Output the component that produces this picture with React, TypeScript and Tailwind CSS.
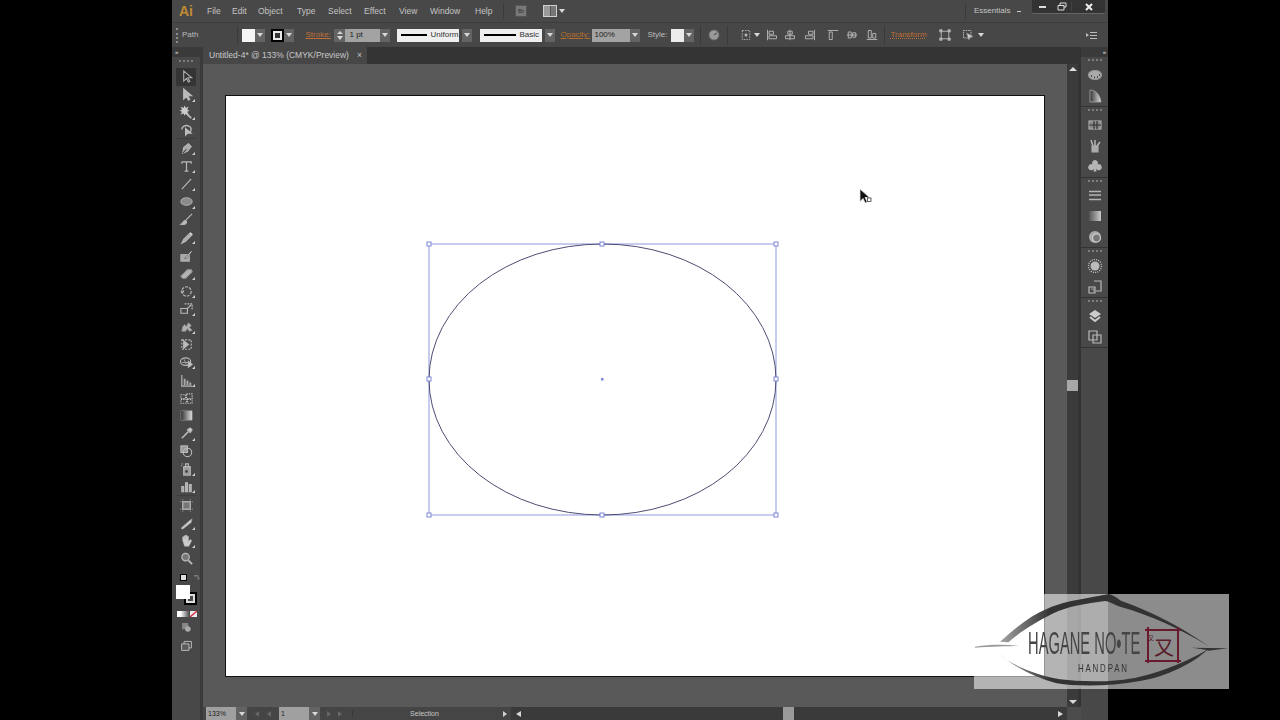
import type { ReactNode } from 'react'

const menus = [
  { label: 'File', w: 'w-[25px]' },
  { label: 'Edit', w: 'w-[26px]' },
  { label: 'Object', w: 'w-[39px]' },
  { label: 'Type', w: 'w-[31px]' },
  { label: 'Select', w: 'w-[36px]' },
  { label: 'Effect', w: 'w-[35px]' },
  { label: 'View', w: 'w-[31px]' },
  { label: 'Window', w: 'w-[45px]' },
  { label: 'Help', w: 'w-[28px]' },
]

function Icon({ children, size = 16 }: { children: ReactNode; size?: number }) {
  return (
    <svg width={size} height={size} viewBox="0 0 16 16" fill="none" stroke="#b9b9b9" strokeWidth="1.2" className="blur-[0.4px]">
      {children}
    </svg>
  )
}

function Caret({ className = '' }: { className?: string }) {
  return <span className={`block w-0 h-0 border-x-[3px] border-x-transparent border-t-[4px] border-t-[#d8d8d8] ${className}`} />
}

function DropBtn({ className = '' }: { className?: string }) {
  return (
    <div className={`w-[10px] h-[13px] bg-[#636363] flex items-center justify-center ${className}`}>
      <Caret />
    </div>
  )
}

const tools: { icon: ReactNode; flyout?: boolean; active?: boolean; sep?: boolean }[] = [
  { active: true, icon: <path d="M5 2v11l3-3 2 4 1.5-.7-2-4h4z" stroke="#aaa" fill="#333" /> },
  { flyout: true, icon: <path d="M5 2v11l3-3 2 4 1.5-.7-2-4h4z" fill="#bbb" stroke="#bbb" /> },
  { flyout: true, icon: <g><path d="M7 8l6 6" strokeWidth="2" /><path d="M6 2l1 2 2-1-1 2 2 1-2 1 1 2-2-1-1 2-1-2-2 1 1-2-2-1 2-1-1-2 2 1z" fill="#ccc" stroke="#ccc" /></g> },
  { sep: true, icon: <g><path d="M3 8a5 4 0 1 1 8 3" strokeWidth="1.5" /><path d="M7 7v7l2-2 4 0z" fill="#bbb" stroke="#bbb" /></g> },
  { flyout: true, icon: <g><path d="M4 13l1-6 5-4 3 3-4 5z" fill="#aaa" /><path d="M4 13l4-4" stroke="#444" /></g> },
  { flyout: true, icon: <path d="M3 3h10v2M3 3v2M8 3v10M6 13h4" strokeWidth="1.3" /> },
  { flyout: true, icon: <path d="M3 14L13 3" /> },
  { flyout: true, icon: <ellipse cx="8" cy="8" rx="6" ry="4" fill="#8a8a8a" stroke="#aaa" /> },
  { icon: <g><path d="M14 2L7 9" /><path d="M7 9c-3 0-2 3-5 4 3 1 6 0 6-3z" fill="#bbb" /></g> },
  { flyout: true, icon: <g><path d="M12 3L5 10 3 14l4-2 7-7z" fill="#aaa" /><path d="M12 3l2 2" stroke="#ddd" /></g> },
  { icon: <g><path d="M2 7h9v7H2z" fill="#aaa" stroke="#aaa" /><path d="M6 11l7-8 1 1-6 7z" fill="#ddd" stroke="#333" strokeWidth=".6" /></g> },
  { flyout: true, icon: <path d="M2 11l7-7h4l1 2-7 7H4z" fill="#b5b5b5" stroke="#999" /> },
  { flyout: true, icon: <g><circle cx="8" cy="8" r="5" strokeDasharray="3 1.3" /><path d="M2 7l2 2 1-2" /></g> },
  { flyout: true, icon: <g><path d="M2 8h7v5H2z" /><path d="M6 3h8v7" strokeDasharray="2 1" /><path d="M9 8l4-4" /></g> },
  { flyout: true, icon: <path d="M3 13c1-3 0-5 3-7l2 2 2-4 3 3-2 2 3 3-3 1-2-3-2 3z" fill="#b0b0b0" stroke="#999" strokeWidth=".7" /> },
  { icon: <g><path d="M3 3h10v10H3z" strokeDasharray="2 1.5" /><path d="M5 4l5 4-5 4z" fill="#bbb" /></g> },
  { flyout: true, icon: <g><ellipse cx="7" cy="7" rx="5.5" ry="4" /><path d="M5 4l3 6M3 8h7" strokeWidth=".8" /><path d="M10 7l4 3-4 3z" fill="#ccc" /></g> },
  { flyout: true, icon: <g><path d="M3 2v12h11" /><path d="M5 6h2v7H5zM8 8h2v5H8zM11 10h2v3h-2z" fill="#aaa" stroke="none" /></g> },
  { icon: <path d="M2 4h5v4H2zM8 3h6v5H8zM2 9h6v4H2zM9 9h5v4H9z" strokeDasharray="1.5 1" /> },
  { icon: <rect x="2" y="3" width="12" height="10" fill="url(#tg)" stroke="#999" strokeWidth=".5" /> },
  { flyout: true, icon: <g><path d="M3 13l7-7" strokeWidth="1.6" /><path d="M9 4l3-2 2 2-2 3z" fill="#ccc" /></g> },
  { icon: <g><rect x="2" y="2" width="7" height="7" fill="#999" /><circle cx="9" cy="9" r="4.5" /></g> },
  { flyout: true, icon: <g><rect x="5" y="5" width="7" height="9" fill="#999" /><circle cx="8" cy="10" r="1.6" fill="#444" stroke="none" /><path d="M7 2h3v3H7z" /><path d="M3 2h1M2 4h1" /></g> },
  { flyout: true, sep: true, icon: <path d="M3 14V8h2v6M7 14V4h2v10M11 14V6h2v8" fill="#aaa" /> },
  { icon: <g><rect x="4" y="4" width="8" height="8" fill="#777" /><path d="M1 4h14M1 12h14M4 1v14M12 1v14" strokeWidth=".6" strokeDasharray="1.5 1" /></g> },
  { flyout: true, icon: <path d="M2 13l9-8 3-2-1 4-9 7z" fill="#ccc" stroke="#999" strokeWidth=".6" /> },
  { flyout: true, icon: <path d="M4 8V4h1.5v3V3H7v4V2.5h1.5V7V3.500H10V9l2-2 1.500 1-3 6H6z" fill="#ccc" stroke="#bbb" strokeWidth=".6" /> },
  { icon: <g><circle cx="7" cy="6.500" r="4" fill="#777" stroke="#bbb" /><path d="M10 10l4 4" strokeWidth="2" /></g> },
]

const dockGroups: ReactNode[][] = [
  [
    <g key="a"><ellipse cx="8" cy="8" rx="6.500" ry="4.500" fill="#aaa" stroke="#999" /><path d="M4 9h1M7 10.500h1M10 10h1M12 8h1" stroke="#333" strokeWidth="1.300" /></g>,
    <path key="b" d="M3 2c6 0 10 5 11 12H3z" fill="url(#tg)" stroke="#aaa" strokeWidth=".8" />,
  ],
  [
    <g key="a"><rect x="2" y="4" width="12" height="8" fill="#888" stroke="#aaa" /><path d="M7 4v8M10 4v8M2 8h12" stroke="#333" /></g>,
    <g key="b"><path d="M5 8h6v6H5z" fill="#aaa" stroke="#aaa" /><path d="M6 8L4 2M8 8V2M10 8l3-4" stroke="#bbb" strokeWidth="1.400" /></g>,
    <path key="c" d="M8 2a3 3 0 0 1 2.500 4.500 3 3 0 1 1-1.500 4l.5 3h-3l.5-3a3 3 0 1 1-1.500-4A3 3 0 0 1 8 2z" fill="#b5b5b5" stroke="none" />,
  ],
  [
    <path key="a" d="M2 3.500h12M2 7h12M2 11.500h12" stroke="#b5b5b5" strokeWidth="1.600" />,
    <rect key="b" x="2" y="3" width="12" height="10" fill="url(#tg2)" stroke="none" />,
    <g key="c"><circle cx="8" cy="8" r="6" fill="#aaa" stroke="none" /><circle cx="9.500" cy="9" r="4" fill="#777" stroke="#ccc" /></g>,
  ],
  [
    <g key="a"><circle cx="8" cy="8" r="6.500" strokeDasharray="1.200 1" /><circle cx="8" cy="8" r="4.500" fill="#bbb" stroke="none" /></g>,
    <g key="b"><path d="M7 2h7v10H9" /><path d="M2 8h6v6H2z" /><path d="M4 10h3v3" strokeWidth=".8" /></g>,
  ],
  [
    <g key="a"><path d="M8 2l6 4-6 4-6-4z" fill="#ccc" stroke="none" /><path d="M3 9l5 4 5-4" stroke="#ccc" strokeWidth="2" /></g>,
    <g key="b"><path d="M2 2h8v9H2z" /><path d="M6 6h8v8H6z" /></g>,
  ],
]

function Grip() {
  return <div className="mx-auto w-[14px] h-[2px] border-t-2 border-dotted border-[#7d7d7d]" />
}

function AlignIcon({ v, ml }: { v: number; ml: string }) {
  return (
    <div className={`w-[12px] h-[12px] ${ml}`}>
      <Icon size={12}>
        {v === 0 && <path d="M2 1v14M4 3h6v4H4zM4 9h10v4H4z" />}
        {v === 1 && <path d="M8 1v14M5 3h6v4H5zM2 9h12v4H2z" />}
        {v === 2 && <path d="M14 1v14M6 3h6v4H6zM2 9h10v4H2z" />}
        {v === 3 && <path d="M1 2h14M3 4h4v10H3z" />}
        {v === 4 && <path d="M1 8h14M3 4h4v8H3zM9 5h4v6H9z" />}
        {v === 5 && <path d="M1 14h14M3 2h4v10H3zM9 6h4v6H9z" />}
      </Icon>
    </div>
  )
}

function ControlBar() {
  const label = 'text-[8px] leading-none'
  return (
    <div className="h-[25px] flex items-center bg-[#474747] border-t border-[#3c3c3c] text-[#bdbdbd] relative">
      <div className="ml-[4px] w-[2px] h-[15px] border-l-2 border-dotted border-[#8a8a8a]" />
      <span className={`ml-[4px] ${label}`}>Path</span>
      <div className="ml-[39px] w-px h-[18px] bg-[#3a3a3a]" />
      <div className="ml-[4px] w-[13px] h-[13px] bg-[#f4f4f4]" />
      <DropBtn />
      <div className="ml-[6px] w-[13px] h-[13px] bg-black p-[2px]">
        <div className="w-full h-full bg-[#e8e8e8] p-[2px]">
          <div className="w-full h-full bg-[#333]" />
        </div>
      </div>
      <DropBtn />
      <span className={`ml-[11px] w-[29px] text-[#c0713a] underline ${label}`}>Stroke:</span>
      <div className="w-[11px] h-[13px] bg-[#636363] flex flex-col items-center justify-center gap-[2px]">
        <span className="block w-0 h-0 border-x-[3px] border-x-transparent border-b-[3px] border-b-[#cfcfcf]" />
        <Caret />
      </div>
      <div className={`w-[35px] h-[13px] bg-[#a3a3a3] text-[#222] pl-[4px] flex items-center ${label}`}>1 pt</div>
      <DropBtn />
      <div className="ml-[7px] w-[62px] h-[13px] bg-[#efefef] flex items-center pl-[4px] gap-[3px]">
        <div className="w-[26px] h-[2px] bg-black" />
        <span className={`${label} text-[#333]`}>Uniform</span>
      </div>
      <DropBtn className="ml-[3px]" />
      <div className="ml-[8px] w-[62px] h-[13px] bg-[#efefef] flex items-center pl-[4px] gap-[3px]">
        <div className="w-[32px] h-[2px] bg-black" />
        <span className={`${label} text-[#333]`}>Basic</span>
      </div>
      <DropBtn className="ml-[3px]" />
      <span className={`ml-[5px] w-[32px] text-[#b5702f] underline ${label}`}>Opacity:</span>
      <div className={`w-[38px] h-[13px] bg-[#a3a3a3] text-[#222] pl-[2px] flex items-center ${label}`}>100%</div>
      <DropBtn />
      <span className={`ml-[7px] w-[24px] ${label}`}>Style:</span>
      <div className="w-[13px] h-[13px] bg-[#ececec]" />
      <DropBtn />
      <div className="ml-[6px] w-px h-[18px] bg-[#3a3a3a]" />
      <div className="ml-[7px] w-[12px] h-[12px]">
        <Icon size={12}><circle cx="8" cy="8" r="6.500" fill="#9a9a9a" stroke="#777" /><path d="M8 8l4-3" stroke="#333" /></Icon>
      </div>
      <div className="ml-[7px] w-px h-[18px] bg-[#3a3a3a]" />
      <div className="ml-[12px] w-[12px] h-[12px]">
        <Icon size={12}><path d="M3 2h10v12H3z" strokeDasharray="2 1.500" /><circle cx="8" cy="8" r="1.500" fill="#bbb" /></Icon>
      </div>
      <Caret className="ml-[2px]" />
      <AlignIcon v={0} ml="ml-[6px]" />
      <AlignIcon v={1} ml="ml-[6px]" />
      <AlignIcon v={2} ml="ml-[8px]" />
      <AlignIcon v={3} ml="ml-[11px]" />
      <AlignIcon v={4} ml="ml-[7px]" />
      <AlignIcon v={5} ml="ml-[8px]" />
      <div className="ml-[6px] w-px h-[18px] bg-[#3a3a3a]" />
      <span className={`ml-[5px] w-[36px] text-[#bf6d33] underline decoration-dotted ${label}`}>Transform</span>
      <div className="ml-[13px] w-[12px] h-[12px]">
        <Icon size={12}><path d="M3 3h10v10H3z" /><path d="M1 1h3v3H1zM12 1h3v3h-3zM1 12h3v3H1zM12 12h3v3h-3z" fill="#aaa" /></Icon>
      </div>
      <div className="ml-[11px] w-[12px] h-[12px]">
        <Icon size={12}><path d="M2 2h10v10H2z" strokeDasharray="2 1" /><path d="M6 5l9 5-4 1-2 4z" fill="#ccc" stroke="#777" strokeWidth=".7" /></Icon>
      </div>
      <Caret className="ml-[4px]" />
      <div className="ml-[102px] flex items-center gap-[1px]">
        <span className="block w-0 h-0 border-y-[2px] border-y-transparent border-l-[3px] border-l-[#bbb]" />
        <div className="w-[7px] h-[7px] border-y border-[#bbb] flex items-center"><div className="w-full h-px bg-[#bbb]" /></div>
      </div>
    </div>
  )
}

function Toolbar() {
  return (
    <div className="w-[31px] shrink-0 flex flex-col bg-[#484848] border-r-[3px] border-[#3a3a3a]">
      <div className="h-[10px] bg-[#3a3a3a] text-[#c9c9c9] text-[6px] leading-[10px] pl-[3px] font-bold">»</div>
      <div className="pt-[3px] h-[11px]"><Grip /></div>
      <div className="flex flex-col pl-[4px] pr-[4px]">
        {tools.map((tool, i) => (
          <div key={i} className={`relative h-[17.85px] flex items-center justify-center ${tool.active ? 'bg-[#343434]' : ''} ${tool.sep ? 'border-b border-[#3e3e3e]' : ''}`}>
            <Icon size={15}>{tool.icon}</Icon>
            {tool.flyout && <span className="absolute right-[1px] bottom-[2px] w-0 h-0 border-l-[3px] border-l-transparent border-b-[3px] border-b-[#cfcfcf]" />}
          </div>
        ))}
      </div>
      <div className="mt-[6px] ml-[8px] flex items-center gap-[6px]">
        <div className="w-[7px] h-[7px] bg-[#ddd] border border-black" />
        <Icon size={8}><path d="M3 3h8v8M3 3l3 3M11 11l3-3" /></Icon>
      </div>
      <div className="relative mt-[3px] ml-[4px] w-[21px] h-[20px]">
        <div className="absolute right-0 bottom-0 w-[13px] h-[13px] bg-black p-[2px]">
          <div className="w-full h-full border-2 border-[#ddd] bg-[#4a4a4a]" />
        </div>
        <div className="absolute left-0 top-0 w-[14px] h-[14px] bg-white" />
      </div>
      <div className="mt-[6px] ml-[5px] flex gap-[1px]">
        <div className="w-[12px] h-[6px] bg-[linear-gradient(90deg,#fff_30%,#555)]" />
        <svg width="7" height="6" viewBox="0 0 7 6"><rect width="7" height="6" fill="#eee" /><path d="M0 6L7 0" stroke="#d43a4a" strokeWidth="1.500" /></svg>
      </div>
      <div className="mt-[5px] flex justify-center">
        <Icon size={11}><rect x="2" y="2" width="8" height="8" fill="#888" stroke="#888" /><circle cx="10" cy="10" r="4" fill="#aaa" stroke="none" /></Icon>
      </div>
      <div className="mt-[6px] flex justify-center">
        <Icon size={13}><path d="M5 3h9v8H5z" /><path d="M2 6h9v8H2z" fill="#5a5a5a" /></Icon>
      </div>
    </div>
  )
}

function Selection() {
  const handles = [[203, 148], [376, 148], [550, 148], [203, 283], [550, 283], [203, 419], [376, 419], [550, 419]]
  return (
    <svg className="absolute left-0 top-0" width="818" height="580" viewBox="0 0 818 580">
      <rect x="203" y="148" width="347" height="271" fill="none" stroke="#8f97dd" strokeWidth="1" />
      <ellipse cx="376.500" cy="283.500" rx="173.500" ry="135.500" fill="none" stroke="#4d4d72" strokeWidth="1" />
      {handles.map(([x, y]) => (
        <rect key={`${x}-${y}`} x={x - 2} y={y - 2} width="4" height="4" fill="#fff" stroke="#7d86d8" strokeWidth="1" />
      ))}
      <rect x="375" y="282" width="2.500" height="2.500" fill="#7d86d8" />
    </svg>
  )
}

function Cursor() {
  return (
    <svg className="absolute left-[633px] top-[92px]" width="13" height="16" viewBox="0 0 13 16">
      <path d="M1 1v12.500l3-3 2.200 4.500 2-1-2.200-4.500h4.500z" fill="#111" stroke="#ddd" strokeWidth=".8" />
      <rect x="8.500" y="10" width="3.500" height="3.500" fill="#fff" stroke="#222" strokeWidth=".7" />
    </svg>
  )
}

function StatusBar() {
  const arrowDim = 'block w-0 h-0 border-y-[3px] border-y-transparent'
  return (
    <div className="h-[13px] flex items-center bg-[#454545] text-[#c8c8c8]">
      <div className="ml-[3px] w-[30px] h-[13px] bg-[#a0a0a0] text-[#222] text-[7px] leading-[13px] pl-[2px]">133%</div>
      <DropBtn className="w-[11px]" />
      <div className="ml-[8px] w-[16px] flex items-center justify-between">
        <span className={`${arrowDim} border-r-[4px] border-r-[#666]`} />
        <span className={`${arrowDim} border-r-[4px] border-r-[#666]`} />
      </div>
      <div className="ml-[8px] w-[30px] h-[13px] bg-[#a0a0a0] text-[#222] text-[7px] leading-[13px] pl-[2px]">1</div>
      <DropBtn className="w-[11px]" />
      <div className="ml-[7px] w-[15px] flex items-center justify-between">
        <span className={`${arrowDim} border-l-[4px] border-l-[#666]`} />
        <span className={`${arrowDim} border-l-[4px] border-l-[#666]`} />
      </div>
      <div className="ml-[10px] w-[144px] text-center text-[7px] leading-none border-l border-[#3a3a3a]">Selection</div>
      <span className={`ml-[7px] ${arrowDim} border-l-[4px] border-l-[#d0d0d0]`} />
      <div className="ml-[4px] h-[13px] flex-1 flex items-center bg-[#3a3a3a] relative">
        <span className={`ml-[5px] ${arrowDim} border-r-[5px] border-r-[#d8d8d8]`} />
        <div className="ml-[262px] w-[11px] h-[13px] bg-[#9a9a9a]" />
        <span className={`ml-auto mr-[4px] ${arrowDim} border-l-[5px] border-l-[#d8d8d8]`} />
      </div>
      <div className="w-[14px] h-[13px] bg-[#4c4c4c]" />
    </div>
  )
}

function Dock() {
  return (
    <div className="w-[27px] shrink-0 flex flex-col bg-[#484848]">
      <div className="h-[10px] bg-[#3a3a3a] text-[#c9c9c9] text-[6px] leading-[10px] text-right pr-[2px] font-bold">«</div>
      {dockGroups.map((group, i) => (
        <div key={i} className="flex flex-col border-b border-[#333]">
          <div className="h-[8px] pt-[2px]"><Grip /></div>
          <div className="flex flex-col items-center">
            {group.map((icon, j) => (
              <div key={j} className="h-[20.500px] flex items-center justify-center">
                <Icon size={16}>{icon}</Icon>
              </div>
            ))}
          </div>
        </div>
      ))}
    </div>
  )
}

function Watermark() {
  return (
    <div className="absolute left-[974px] top-[594px] w-[255px] h-[95px] bg-white/55">
      <svg className="absolute left-[-14px] top-[-9px]" width="280" height="115" viewBox="0 0 840 345">
        <defs>
          <linearGradient id="wm" gradientUnits="userSpaceOnUse" x1="120" y1="0" x2="270" y2="0">
            <stop offset="0" stopColor="#a5a5a5" />
            <stop offset="1" stopColor="#333" />
          </linearGradient>
        </defs>
        <path d="M45 185C90 178 130 178 175 182C150 184 90 184 45 188Z" fill="#9a9a9a" />
        <path d="M120 170C170 125 215 90 265 70C320 45 400 38 445 27C465 30 475 45 490 50C560 75 650 115 748 185C660 130 570 90 480 65C460 58 450 50 435 48C380 55 320 65 280 85C225 112 175 145 145 172Z" fill="url(#wm)" />
        <path d="M115 205C160 245 230 280 290 295C350 305 450 305 540 288C620 275 700 235 745 192C690 225 610 260 540 275C470 292 370 292 300 283C230 270 150 240 115 205Z" fill="url(#wm)" />
        <path d="M690 188L805 190L745 197C735 193 715 190 690 188Z" fill="#333" />
      </svg>
      <div className="absolute left-[54px] top-[33px] text-[32px] leading-[32px] text-[#444] whitespace-nowrap origin-left scale-x-[0.46] font-['Liberation_Sans',sans-serif] font-thin">
        HAGANE NO•TE
      </div>
      <div className="absolute left-[104px] top-[68px] text-[11px] leading-[12px] tracking-[2.500px] text-[#333] whitespace-nowrap origin-left scale-x-[0.72] font-['Liberation_Sans',sans-serif]">
        HANDPAN
      </div>
      <svg className="absolute left-[169px] top-[30px]" width="42" height="42" viewBox="0 0 42 42" fill="none" stroke="#6a1a2e" strokeWidth="2">
        <path d="M2 6H38M5 3V39M35 3V39M2 37H38" />
      </svg>
      <div className="absolute left-[180px] top-[43px] text-[20px] leading-[20px] text-[#5a1c2a] font-['Noto_Sans_CJK_JP',sans-serif]">又</div>
      <div className="absolute left-[174px] top-[40px] text-[6px] leading-[7px] text-[#5a1c2a] font-['Noto_Sans_CJK_JP',sans-serif]">又</div>
    </div>
  )
}

export default function App() {
  return (
    <div className="relative w-[1280px] h-[720px] overflow-hidden bg-black font-['Liberation_Sans',sans-serif]">
      <svg width="0" height="0" className="absolute">
        <defs>
          <linearGradient id="tg"><stop offset="0" stopColor="#333" /><stop offset="1" stopColor="#ddd" /></linearGradient>
          <linearGradient id="tg2"><stop offset="0" stopColor="#555" /><stop offset="1" stopColor="#ccc" /></linearGradient>
        </defs>
      </svg>
      <div className="ml-[172px] w-[936px] h-[720px] flex flex-col bg-[#484848]">
        <div className="h-[22px] flex items-center text-[#c4c4c4] relative">
          <span className="ml-[7px] w-[28px] text-[14px] leading-none font-bold text-[#c08a35]">Ai</span>
          {menus.map((m) => (
            <span key={m.label} className={`${m.w} text-[8.500px] leading-none`}>{m.label}</span>
          ))}
          <div className="w-px h-[16px] bg-[#3a3a3a]" />
          <div className="ml-[11px] w-[12px] h-[12px] bg-[#787878] border border-[#555] text-[6px] leading-[10px] text-center text-[#333]">Br</div>
          <div className="ml-[16px] w-[14px] h-[12px] border border-[#cfcfcf] bg-[#555] grid grid-cols-2 gap-px">
            <div className="bg-[#999]" />
            <div className="bg-[#777]" />
          </div>
          <Caret className="ml-[2px]" />
          <div className="ml-[400px] w-px h-[16px] bg-[#3a3a3a]" />
          <span className="ml-[8px] w-[43px] text-[8px] leading-none">Essentials</span>
          <span className="block w-[4px] h-[1px] bg-[#ccc]" />
          <div className="ml-[11px] w-[73px] h-[14px] self-start flex items-center bg-[#333] rounded-b-[2px] border-b border-[#666] text-[#ddd]">
            <div className="w-[20px] flex justify-center"><div className="w-[7px] h-[2px] bg-[#ddd]" /></div>
            <div className="w-[20px] flex justify-center border-r border-[#444]">
              <svg width="10" height="9" viewBox="0 0 10 9" fill="none" stroke="#ddd"><path d="M3 3V1h6v4H7M1 3.500h6v4.500H1z" /></svg>
            </div>
            <div className="flex-1 flex justify-center">
              <svg width="8" height="8" viewBox="0 0 8 8" stroke="#eee" strokeWidth="2"><path d="M1 1l6 6M7 1L1 7" /></svg>
            </div>
          </div>
        </div>
        <ControlBar />
        <div className="flex-1 flex min-h-0">
          <Toolbar />
          <div className="flex-1 flex flex-col min-w-0">
            <div className="h-[17px] bg-[#333] flex">
              <div className="w-[164px] h-[17px] bg-[#474747] flex items-center pl-[6px] text-[8.500px] text-[#c8c8c8] whitespace-nowrap">
                <span>Untitled-4* @ 133% (CMYK/Preview)</span>
                <span className="ml-[8px]">×</span>
              </div>
            </div>
            <div className="flex-1 flex min-h-0">
              <div className="flex-1 bg-[#595959] pl-[23px] pt-[32px] min-w-0">
                <div className="relative w-[818px] h-[580px] bg-white outline outline-1 outline-[#111]">
                  <Selection />
                  <Cursor />
                </div>
              </div>
              <div className="w-[14px] bg-[#3b3b3b] border-r-[3px] border-[#333] flex flex-col items-center justify-between py-[3px]">
                <span className="block w-0 h-0 border-x-[4px] border-x-transparent border-b-[4px] border-b-[#e0e0e0]" />
                <div className="absolute top-[380px] w-[11px] h-[11px] bg-[#a8a8a8]" />
                <Caret className="border-x-[4px] border-t-[4px]" />
              </div>
            </div>
            <StatusBar />
          </div>
          <Dock />
        </div>
      </div>
      <Watermark />
    </div>
  )
}
